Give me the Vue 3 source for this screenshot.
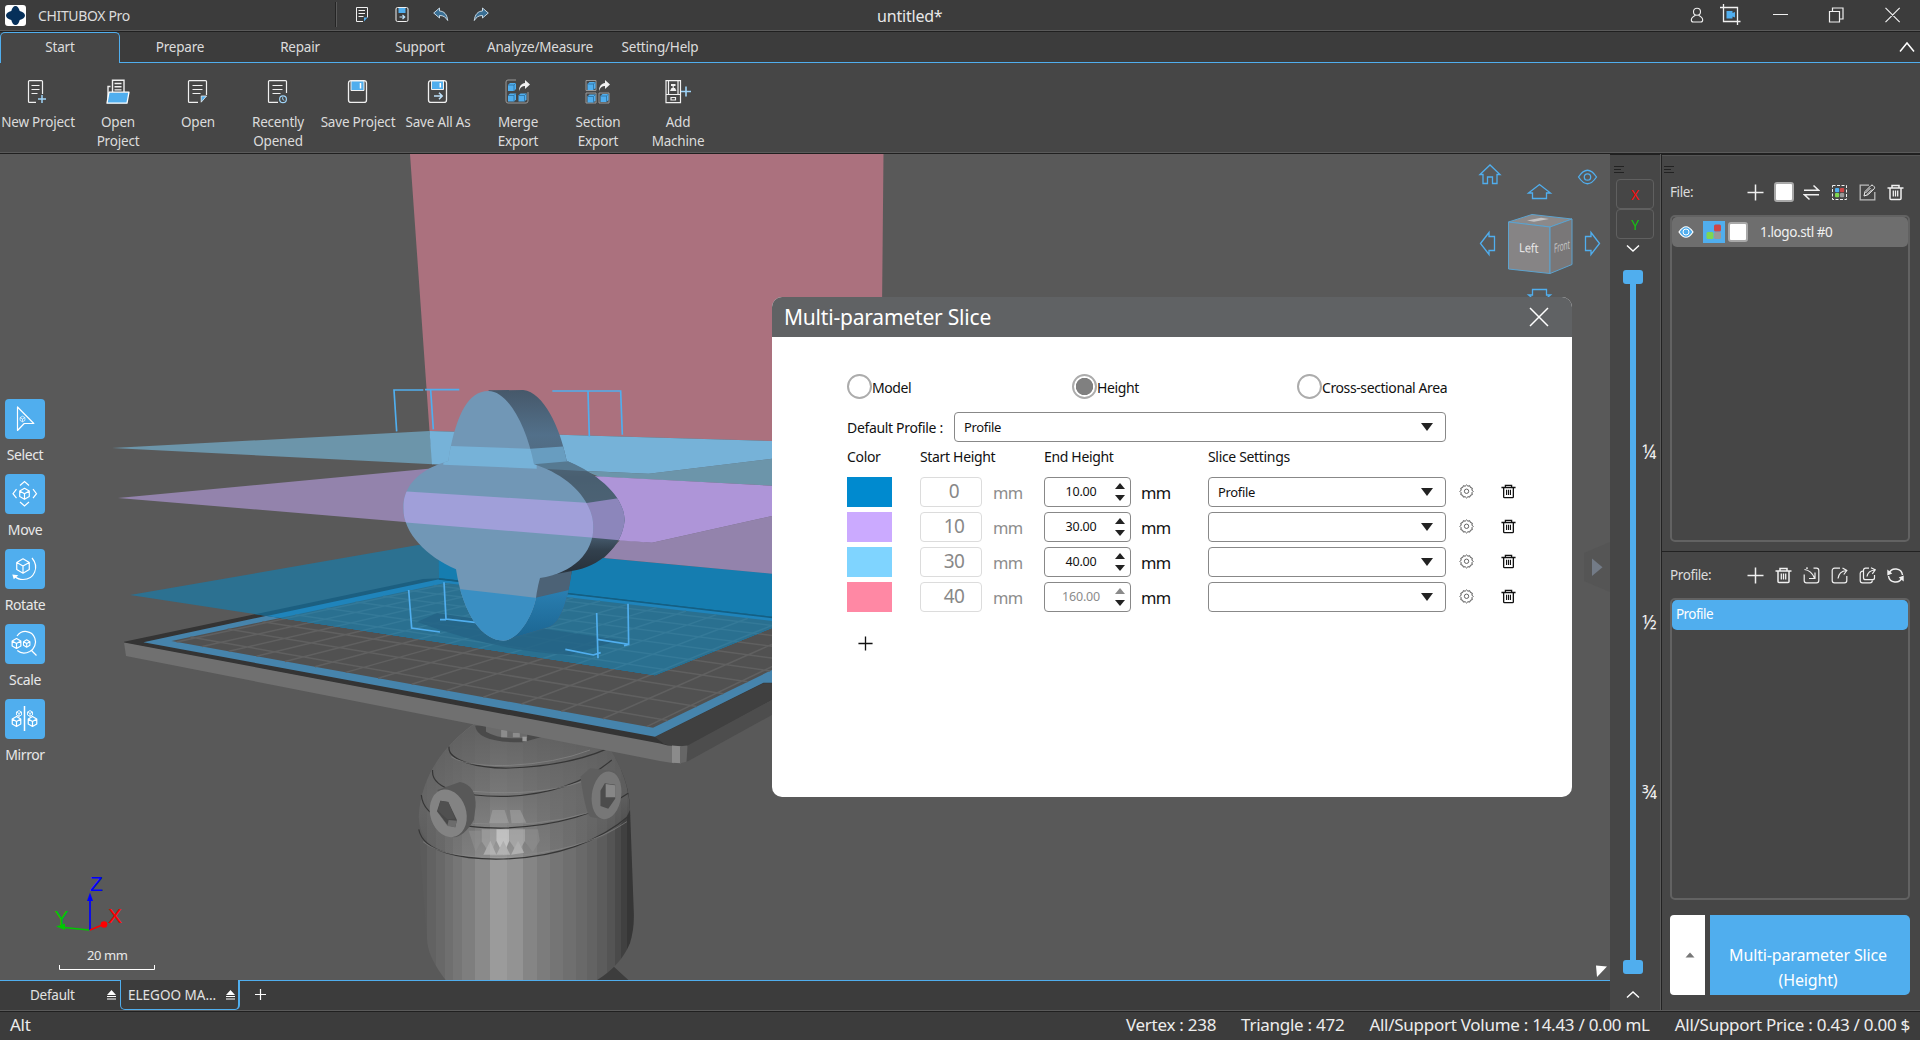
<script setup>
const tabs = ['Start', 'Prepare', 'Repair', 'Support', 'Analyze/Measure', 'Setting/Help']

const W = '#f0f0f0'
const B = '#50aeee'
const cube = (x, y, r, c, w = 1) => {
  const h = r * 0.87
  const q = r / 2
  return `<path fill="none" stroke="${c}" stroke-width="${w}" stroke-linejoin="round" d="M${x} ${y - r}l${h} ${q}v${r}l${-h} ${q}l${-h} ${-q}v${-r}zM${x - h} ${y - q}l${h} ${q}l${h} ${-q}M${x} ${y}v${r}"/>`
}
const solid = (x, y) =>
  `<path fill="${B}" d="M${x} ${y + 2}l2-2h6v6l-2 2h-6z"/><path fill="none" stroke="#2f6f9c" stroke-width=".8" d="M${x} ${y + 2}h6l2-2M${x + 6} ${y + 2}v6"/>`

const icons = {
  newProject: `<path fill="none" stroke="${W}" stroke-width="1.2" d="M12 23.4H5.5a1 1 0 0 1-1-1V2.6a1 1 0 0 1 1-1h12a1 1 0 0 1 1 1V15M7.500 6.500h8M7.500 10.500h8M7.500 14.500h6"/><path stroke="#9fd4f8" stroke-width="1.500" d="M18 16v8M14 20h8"/>`,
  openProject: `<path fill="none" stroke="${W}" stroke-width="1.400" d="M8.500 13V1.200h11.500V13M4 20V7.500h2.500M10.500 4.500h7M10.500 7.700h7M10.500 10.900h7"/><path fill="#50aeee" stroke="#fff" stroke-width="1.300" stroke-linejoin="round" d="M5 13.200h20l-2 11H3z"/>`,
  open: `<path fill="none" stroke="${W}" stroke-width="1.200" d="M14 23.400H5.500a1 1 0 0 1-1-1V2.600a1 1 0 0 1 1-1h16a1 1 0 0 1 1 1V16M8.500 6.500h10M8.500 10.500h10M8.500 14.500h8"/><path fill="${B}" stroke="${W}" stroke-width=".8" d="M22.600 17h-5.400v6.200z"/>`,
  recent: `<path fill="none" stroke="${W}" stroke-width="1.200" d="M14 23.400H5.500a1 1 0 0 1-1-1V2.600a1 1 0 0 1 1-1h16a1 1 0 0 1 1 1V14M8.500 6.500h10M8.500 10.500h10M8.500 14.500h8"/><circle cx="19" cy="20.200" r="3.400" fill="none" stroke="#9fd4f8" stroke-width="1.200"/><path fill="none" stroke="#9fd4f8" d="M18.700 18.200v2.200l1.600 1"/>`,
  save: `<rect x="4.500" y="1.600" width="18" height="21.800" rx="2.500" fill="none" stroke="${W}" stroke-width="1.300"/><path fill="${B}" stroke="${W}" d="M7 2h13v9.500H7z"/><path stroke="#fff" stroke-width="1.500" d="M16.500 4v5.500"/>`,
  saveAs: `<rect x="4.500" y="1.600" width="18" height="21.800" rx="2.500" fill="none" stroke="${W}" stroke-width="1.300"/><path fill="${B}" stroke="${W}" d="M7.500 2h12v8.500h-12z"/><path stroke="#fff" stroke-width="1.500" d="M16.300 4v4.500"/><path fill="none" stroke="#bfe2fb" stroke-width="1.500" d="M10 17h8M15 13.800l3.200 3.200-3.200 3.200"/>`,
  merge: `<path fill="none" stroke="#999" d="M12 1H4a2 2 0 0 0-2 2v19a2 2 0 0 0 2 2h18a2 2 0 0 0 2-2v-9"/>${solid(4, 4)}${solid(4, 14.5)}${solid(14.5, 14.5)}<path fill="${W}" d="M15 12c0-5 2.500-7.500 6-8V1l5 4.500-5 4.500V7c-3 .2-5 1.500-6 5z"/>`,
  section: `<path fill="none" stroke="#999" d="M2 1.500h10v10H2zM2 14h10v10H2zM15 14h10v10H15z"/>${solid(3.5, 3)}${solid(3.5, 15.5)}${solid(16.5, 15)}<path fill="${W}" d="M15 12c0-5 2.500-7.500 6-8V1l5 4.500-5 4.500V7c-3 .2-5 1.500-6 5z"/>`,
  machine: `<path fill="none" stroke="${W}" stroke-width="1.200" d="M2 1.600h14.500v22H2zM4.500 1.600V15M14 1.600V15M2 15.500h14.500M7 18.500h4.500v2.500H7zM9.200 5.500v4"/><path fill="${W}" d="M7 5h4.500v2H7zM6 12l1.500-3h3.500l1.500 3z"/><path stroke="#9fd4f8" stroke-width="1.600" d="M22 7.500v10M17 12.500h10"/>`,
  doc: `<path fill="none" stroke="${W}" stroke-width="1" d="M9 15.500H2.500V1.500h11v10M4.500 4.500h6.500M4.500 7.500h6.500M4.500 10.500h5"/><path fill="${B}" d="M13.500 11.500h-3.500v4z"/>`,
  qsave: `<rect x="2" y="1.500" width="12" height="14" rx="1.500" fill="none" stroke="${W}"/><path fill="${B}" d="M4.500 2h7v5h-7z"/><path fill="none" stroke="#bfe2fb" stroke-width="1.200" d="M5.500 11h5M8.500 9l2.200 2-2.200 2"/>`,
  undo: `<path fill="#3a6f94" stroke="#d8e6f0" stroke-width=".9" stroke-linejoin="round" d="M.7 7 6.500 2v3c4.500.2 7.500 3.200 8.200 9.500C12.500 11 10.500 9.500 6.500 9.500v2.500z"/>`,
  redo: `<path fill="#3a6f94" stroke="#d8e6f0" stroke-width=".9" stroke-linejoin="round" d="M15.300 7 9.500 2v3C5 5.200 2 8.200 1.300 14.500 3.500 11 5.500 9.500 9.500 9.500v2.500z"/>`,
  user: `<circle cx="8" cy="4.700" r="3.500" fill="none" stroke="${W}" stroke-width="1.100"/><path fill="none" stroke="${W}" stroke-width="1.100" d="M6.500 8.200C3.800 9.500 2.300 11.500 2.300 13c0 1.500.7 2 2 2h7.400c1.300 0 2-.5 2-2 0-1.500-1.500-3.500-4.200-4.800"/>`,
  record: `<path fill="none" stroke="${W}" stroke-width="1.300" d="M3.500 0v17.500H20.500M0 3.500h17.500V21"/><path fill="${B}" d="M6.500 7h6v2l2.500-1v5.500l-2.500-1v2h-6z"/>`,
  trash: `<path fill="none" stroke="currentColor" stroke-width="1.500" d="M.5 4h16M5 4V1.500h7V4M3 4v10.500a1 1 0 0 0 1 1h9a1 1 0 0 0 1-1V4"/><path stroke="currentColor" stroke-width="1.300" d="M6.300 6.500v6M8.500 6.500v6M10.700 6.500v6"/>`,
  plus: `<path stroke="currentColor" stroke-width="1.500" d="M8.500 .5v16M.5 8.500h16"/>`,
  swap: `<path fill="none" stroke="${W}" stroke-width="1.500" d="M1 6.200h14.500L10.500 1.500M16 10.800H1.500l5 4.700"/>`,
  palette: `<rect x="1.500" y="1.500" width="14" height="14" fill="none" stroke="${W}" stroke-dasharray="3 1.500"/><rect x="4" y="4" width="4.200" height="4.200" rx="1" fill="#50aeee"/><rect x="9" y="4" width="4.200" height="4.200" rx="1" fill="#cf4646"/><rect x="4" y="9" width="4.200" height="4.200" rx="1" fill="#7fd651"/><rect x="9" y="9" width="4.200" height="4.200" rx="1" fill="#999"/>`,
  edit: `<path fill="none" stroke="#bbb" stroke-width="1.300" d="M10 1.200H1.200v14.600h14.600V8"/><path fill="none" stroke="${W}" d="M5 12l1-4.500 6-6a1.500 1.500 0 0 1 2 0l1.200 1.200a1.500 1.500 0 0 1 0 2l-6 6zM6.500 9l5-5M8 10.500l5-5"/>`,
  importIn: `<path fill="none" stroke="${W}" stroke-width="1.200" d="M5 1.200H3M10.500 1.200h3a2.300 2.300 0 0 1 2.300 2.300v10a2.300 2.300 0 0 1-2.300 2.300h-10a2.300 2.300 0 0 1-2.300-2.300v-6M1.500 2.500C5 3 9 5 11.500 11M12 5.500v6H6"/>`,
  exportOut: `<path fill="none" stroke="${W}" stroke-width="1.200" d="M9 1.200H3.500a2.300 2.300 0 0 0-2.300 2.300v10a2.300 2.300 0 0 0 2.300 2.300h10a2.300 2.300 0 0 0 2.300-2.300V9M7 11.500c.5-4 3-7.500 8.500-8M11.500 1l4.300 2.500-3 4"/>`,
  exportAll: `<path fill="none" stroke="${W}" stroke-width="1.200" d="M10 1.200H6.500a2 2 0 0 0-2 2v7.500a2 2 0 0 0 2 2h7a2 2 0 0 0 2-2V8M4 4.200a2.500 2.500 0 0 0-2.800 2.300v7a2.300 2.300 0 0 0 2.300 2.300h7.500a2.300 2.300 0 0 0 2.300-2.300M8 9.500c.5-3 3-6 8-6.500M12 .8l4.300 2-3 4"/>`,
  refresh: `<path fill="none" stroke="${W}" stroke-width="1.500" d="M2 6.500a7 7 0 0 1 13.500 1.500M15 10.500A7 7 0 0 1 1.500 9"/><path fill="${W}" d="M.3 2.500v6l5-2zM16.700 14.500v-6l-5 2z"/>`,
  gear: `<path fill="none" stroke="#555" stroke-width="1.100" d="M8 1.500l1.500 1.400 2.100-.5.600 2 2.100.600-.4 2.200 1.400 1.500-1.400 1.400.4 2.200-2.100.600-.6 2-2.100-.4L8 15.900l-1.500-1.400-2.100.4-.6-2-2.100-.6.4-2.200L.7 8.700l1.400-1.500-.4-2.200 2.100-.6.600-2 2.100.5z" transform="translate(.3 -.5)"/><circle cx="8.300" cy="8" r="2.400" fill="none" stroke="#555"/>`,
  select: `<path fill="none" stroke="#fff" stroke-width="1.200" stroke-linejoin="round" d="M12.500 8v23.500l6.700-7h9.600z"/>${cube(17.5, 20, 2.8, '#fff', 0.7)}`,
  move: `<path fill="none" stroke="#fff" stroke-width="1.200" d="M15 11.500l4.500-4 4.500 4M15 28l4.500 4 4.500-4M11.500 15.200 8 19.700l3.500 4.500M28 15.200l3.500 4.500-3.500 4.500"/>${cube(19.5, 19.8, 5.5, '#fff', 1.2)}`,
  rotate: `${cube(18, 17, 7.2, '#fff', 1.2)}<path fill="none" stroke="#fff" stroke-width="1.200" d="M27 9c7.500 9 2.500 21.500-9 21.500-3.500 0-6-1-8-3"/><path fill="#fff" d="M7.300 25.500l6 .8-4.500 4z"/>`,
  scale: `${cube(11.5, 19.5, 5, '#fff', 1.2)}${cube(21.7, 19.5, 3.7, '#fff', 1.1)}<path fill="none" stroke="#fff" stroke-width="1.200" d="M12 12C17 5 27 6.500 29.800 14c2 5-.5 11-5 13.500-4 2-9 2-12.500-1M26.500 26.500l5 5"/>`,
  mirror: `<path stroke="#fff" stroke-width="1.500" d="M19.500 7v25"/>${cube(11.5, 22.5, 4.9, '#fff', 1.2)}${cube(27.5, 22.5, 4.9, '#fff', 1.2)}${cube(14, 14.5, 2.9, '#fff', 0.9)}${cube(25, 14.5, 2.9, '#fff', 0.9)}`,
}

const ribbon = [
  { icon: 'newProject', lines: ['New Project'] },
  { icon: 'openProject', lines: ['Open', 'Project'] },
  { icon: 'open', lines: ['Open'] },
  { icon: 'recent', lines: ['Recently', 'Opened'] },
  { icon: 'save', lines: ['Save Project'] },
  { icon: 'saveAs', lines: ['Save All As'] },
  { icon: 'merge', lines: ['Merge', 'Export'] },
  { icon: 'section', lines: ['Section', 'Export'] },
  { icon: 'machine', lines: ['Add', 'Machine'] },
]

const tools = [
  ['select', 'Select'],
  ['move', 'Move'],
  ['rotate', 'Rotate'],
  ['scale', 'Scale'],
  ['mirror', 'Mirror'],
]

const rows = [
  { tone: 'blue', start: '0', end: '10.00', profile: 'Profile' },
  { tone: 'violet', start: '10', end: '30.00', profile: '' },
  { tone: 'sky', start: '30', end: '40.00', profile: '' },
  { tone: 'pink', start: '40', end: '160.00', profile: '', last: true },
]

const status = ['Vertex : 238', 'Triangle : 472', 'All/Support Volume : 14.43 / 0.00 mL', 'All/Support Price : 0.43 / 0.00 $']

// Build plate grid: the plate is 143.4 x 89.6 mm, seen in perspective.
const [p0, p1, p2, p3] = [[171.5, 641], [653, 727.7], [853.5, 630.5], [445, 583]]
const dx1 = p1[0] - p2[0], dx2 = p3[0] - p2[0], dx3 = p0[0] - p1[0] + p2[0] - p3[0]
const dy1 = p1[1] - p2[1], dy2 = p3[1] - p2[1], dy3 = p0[1] - p1[1] + p2[1] - p3[1]
const det = dx1 * dy2 - dx2 * dy1
const g = (dx3 * dy2 - dx2 * dy3) / det
const h = (dx1 * dy3 - dx3 * dy1) / det
const project = (u, v) => {
  const w = g * u + h * v + 1
  const x = ((p1[0] - p0[0] + g * p1[0]) * u + (p3[0] - p0[0] + h * p3[0]) * v + p0[0]) / w
  const y = ((p1[1] - p0[1] + g * p1[1]) * u + (p3[1] - p0[1] + h * p3[1]) * v + p0[1]) / w
  return `${x.toFixed(1)} ${y.toFixed(1)}`
}
let grid = ''
for (let i = 0; i < 15; i++) {
  const u = (i + 0.2) / 14.34
  grid += `M${project(u, 0)}L${project(u, 1)}`
}
for (let i = 0; i < 9; i++) {
  const v = (i + 0.48) / 8.96
  grid += `M${project(0, v)}L${project(1, v)}`
}

// Facets of the cylinder, left to right.
const shades = ['#5b5b5b', '#626262', '#686868', '#6f6f6f', '#767676', '#7e7e7e', '#8a8a8a', '#9b9b9b', '#939393', '#858585', '#7c7c7c', '#757575', '#6f6f6f', '#696969', '#636363', '#5c5c5c', '#545454', '#4a4a4a', '#404040', '#363636']
const bounds = [0, 4, 8, 12, 16, 20, 26, 33, 41, 48.5, 55, 61, 67, 73, 78, 83, 87.5, 91, 94, 97, 100]
const facets = shades.flatMap((c, i) => [
  { at: bounds[i] + '%', c },
  { at: bounds[i + 1] + '%', c },
])
</script>

<template>
  <div class="app">
    <header class="titlebar">
      <svg class="logo" width="21" height="21" viewBox="0 0 21 21"><rect width="21" height="21" rx="3" fill="#fff" /><path fill="#06305a" d="M10.500 1c2 0 3.500 2 4.200 5 3 .8 5.300 2.500 5.300 4.500s-2.300 3.700-5.300 4.500c-.7 3-2.200 5-4.200 5s-3.500-2-4.200-5C3.300 14.200 1 12.500 1 10.500S3.300 6.800 6.300 6C7 3 8.500 1 10.500 1z" /></svg>
      <span class="appname">CHITUBOX Pro</span>
      <i class="vline"></i>
      <svg v-for="n in ['doc', 'qsave', 'undo', 'redo']" :key="n" class="quick" width="16" height="17" viewBox="0 0 16 17" v-html="icons[n]"></svg>
      <span class="doctitle">untitled*</span>
      <svg class="user" width="16" height="16" viewBox="0 0 16 16" v-html="icons.user"></svg>
      <svg class="record" width="21" height="21" viewBox="0 0 21 21" v-html="icons.record"></svg>
      <svg class="winctl" width="128" height="16" viewBox="0 0 128 16" fill="none" stroke="#f0f0f0" stroke-width="1.200"><path d="M0 7.500h15M56.500 4.500h10v10.500h-10zM59.500 4.500V1h10.500v11h-3.500M112.500 .8l14.200 14.400M126.700 .8l-14.200 14.400" /></svg>
    </header>

    <nav class="tabs">
      <span v-for="(t, i) in tabs" :key="t" class="tab" :class="{ active: i === 0 }">{{ t }}</span>
      <span class="tabrest"><svg width="16" height="12" viewBox="0 0 16 12"><path d="M1 10.500 8 2l7 8.500" fill="none" stroke="#fff" stroke-width="1.500" /></svg></span>
    </nav>

    <section class="ribbon">
      <div v-for="r in ribbon" :key="r.icon" class="rbtn">
        <svg width="27" height="26" viewBox="0 0 27 26" v-html="icons[r.icon]"></svg>
        <span v-for="l in r.lines" :key="l">{{ l }}</span>
      </div>
    </section>

    <main class="main">
      <div class="center">
        <div class="viewport">
          <svg class="scene" width="1610" height="826" viewBox="0 154 1610 826">
            <defs>
              <linearGradient id="cyl"><stop v-for="(f, i) in facets" :key="i" :offset="f.at" :stop-color="f.c" /></linearGradient>
              <linearGradient id="dome" x1="0" y1="0" x2="0" y2="1"><stop offset="0" stop-color="#5c5c5c" stop-opacity=".9" /><stop offset=".55" stop-color="#6a6a6a" stop-opacity=".7" /><stop offset="1" stop-color="#6a6a6a" stop-opacity="0" /></linearGradient>
              <linearGradient id="side" x1="0" y1="0" x2="0" y2="1"><stop offset="0" stop-color="#46586a" /><stop offset=".18" stop-color="#52708a" /><stop offset=".3" stop-color="#50687d" /><stop offset=".35" stop-color="#475d70" /><stop offset=".55" stop-color="#526c82" /><stop offset=".64" stop-color="#32404d" /><stop offset=".72" stop-color="#28323c" /><stop offset=".76" stop-color="#4a6075" /><stop offset="1" stop-color="#4a6075" /></linearGradient>
              <linearGradient id="sideBlue" x1="0" y1="0" x2="0" y2="1"><stop offset="0" stop-color="#2a7fb2" /><stop offset="1" stop-color="#1a638e" /></linearGradient>
              <path id="frontShape" d="M325 723C262 723 233 800 214 882Q208 905 205 933Q180 940 155 952C100 980 70 1020 70 1075C70 1150 140 1220 228 1258C250 1400 310 1472 370 1472C425 1468 465 1380 470 1330Q474 1305 480 1284C580 1268 640 1210 640 1130C638 1040 550 970 462 943C440 830 385 723 325 723Z" />
              <path id="sideShape" d="M325 721L430 720C490 727 540 830 560 932C640 965 733 1030 734 1112C725 1190 660 1250 575 1263C565 1340 545 1420 505 1432L370 1472L480 1284L600 1100L462 943Z" />
              <clipPath id="frontClip"><use href="#frontShape" /></clipPath>
              <clipPath id="sideClip"><use href="#sideShape" /></clipPath>
              <clipPath id="layerClip"><path d="M130 595L418 545L772 573V628L655 675.300z" /></clipPath>
              <clipPath id="sceneClip"><path d="M0 154h790V980H0z" /></clipPath>
            </defs>

            <g clip-path="url(#sceneClip)">
              <g transform="translate(100 560) scale(.43367 .33333)">
                <path fill="#3d3d3d" d="M1185 1190v30l35 42H1000z" />
                <path fill="url(#cyl)" d="M865 490C800 550 740 640 735 770L740 900L755 1150Q760 1200 800 1265H1140Q1200 1220 1222 1150Q1232 1110 1231 1060L1222 740C1220 680 1200 610 1172 560L1020 520Z" />
                <path fill="url(#dome)" d="M865 490C800 550 740 640 735 770Q738 860 810 880Q930 910 1060 880Q1200 830 1222 750C1220 680 1200 610 1172 560L1020 520Z" />
                <g opacity=".6"><path fill="#8f8f8f" d="M850 812h28v34l-12 30zM980 808h30l4 34-16 34-20-34z" /><path fill="#a8a8a8" d="M880 808h34v32l-14 44-20-40z" /><path fill="#e2e2e2" d="M914 808h30v34l-14 42-16-42z" /><path fill="#b5b5b5" d="M944 808h36v34l-16 38-20-38z" /><path fill="#c4c4c4" d="M900 842l14 42h-30zM930 842l16 42h-32zM964 842l14 36-30 6z" /><path fill="#b0b0b0" d="M905 750h28l10 40h-46zM945 750h24l14 38-34 2z" opacity=".7" /></g>
                <g fill="none" stroke="#363636" stroke-width="1.200">
                  <path vector-effect="non-scaling-stroke" d="M805 560C800 600 870 626 945 624Q1080 618 1172 565" />
                  <path vector-effect="non-scaling-stroke" d="M767 630C762 690 850 712 940 709Q1090 700 1180 600" />
                  <path vector-effect="non-scaling-stroke" d="M741 705C745 780 830 806 935 804Q1110 795 1218 700" />
                  <path vector-effect="non-scaling-stroke" d="M735 808C745 875 830 900 930 897Q1110 890 1222 765" />
                </g>
                <g fill="none" stroke="#8c8c8c" opacity=".6">
                  <path vector-effect="non-scaling-stroke" d="M810 590C840 616 900 618 945 616Q1050 610 1130 570" />
                  <path vector-effect="non-scaling-stroke" d="M860 694Q1010 710 1110 665" />
                  <path vector-effect="non-scaling-stroke" d="M860 790Q1010 805 1130 757" />
                  <path vector-effect="non-scaling-stroke" d="M745 845C790 890 860 892 930 889Q1110 878 1215 785" />
                </g>
                <path fill="#4a4a4a" d="M865 497Q870 548 975 547L1020 530L985 490z" />
                <path fill="#6a6a6a" d="M890 497h95v36q-60 8-95-18z" /><path fill="#8c8c8c" d="M925 510h14v22h-14zM952 518h16v14h-16z" /><path fill="#9a9a9a" d="M974 530h10v14h-10z" />
                <path fill="#585858" d="M778 690L830 666Q868 675 866 740L862 780Q840 830 815 832z" />
                <ellipse cx="803" cy="760" rx="42" ry="72" fill="#838383" transform="rotate(-8 803 760)" />
                <path fill="#484848" d="M785 722l18 4 20 54-4 22-18-6-24-42z" /><path fill="#6c6c6c" d="M777 752l24 44 3-16 19 2-4 20-18-4z" /><path fill="#505050" d="M785 722l18 4 16 50-18 2-22-26z" />
                <path fill="#5e5e5e" d="M1108 650L1130 625L1185 632L1200 660L1160 778L1130 770Q1118 750 1108 650z" />
                <ellipse cx="1168" cy="706" rx="34" ry="72" fill="#777" transform="rotate(5 1168 706)" />
                <path fill="#4c4c4c" d="M1164 670l24 4v42l-16 30-18-8v-46z" /><path fill="#878787" d="M1166 672l22 4v36h-22z" />
              </g>

              <path fill="#343434" d="M124 641.700L423 579L445 578L790 618V690L687.600 746H668L124 643z" />
              <path fill="#404040" d="M655 737L763.500 683.300H790V690L687.600 746Q676 748 664 744z" />
              <path fill="#707070" d="M124 642.500L660 743.500Q668 746 674 746V763.300L660 761L126 656z" />
              <path fill="#8b8b8b" d="M672 745.500l9 .8v17l-9-.5z" /><path fill="#666" d="M680 746.300l7.600-.8v16l-7.600 1.800z" />
              <path fill="#4d4d4d" d="M687.600 745.500L790 690V705L686.500 762z" />
              <path fill="#4684ac" d="M143.400 642.300L438 579L790 619V682.700H763.500L655 736.700z" />
              <path fill="#515151" d="M171.500 641L445 583L853.500 630.500L653 727.700z" />
              <path :d="grid" fill="none" stroke="#606060" stroke-width="1.500" />

              <g clip-path="url(#layerClip)">
                <path fill="#2c7191" d="M100 540h700v150H100z" />
                <path fill="#1c5f80" d="M124 641.700L423 579L445 578L790 618V690H400z" />
                <path fill="#1f84bb" d="M143.400 642.300L438 579.500L790 619V690H500z" />
                <path fill="#2a7090" d="M171.500 641L445 583L853.500 630.500L653 727.700z" />
                <path :d="grid" fill="none" stroke="#347998" stroke-width="1.500" />
                <path fill="#246384" d="M417 622L437 613L620 640L570 655Q500 652 417 622z" opacity=".8" />
              </g>
              <path fill="#157db0" d="M438.700 558L604 558L772 573.700V616.700L567 593L439 578z" />
              <path fill="none" stroke="#145f83" stroke-width="1.500" d="M439 579L567 593.500L772 617.500" />
            </g>

            <path fill="#ab717e" d="M410 154H883.500L882 310L772 460V441L429.500 431z" />

            <g clip-path="url(#sceneClip)">
              <path fill="#6c95aa" d="M112 448L429.500 431L433 464.300zM585 471L648.700 473.700L772 458.700V485.700L599 476.700z" />
              <path fill="#76b2d8" d="M429.500 431L772 441V458.700L648.700 473.700L432 464.300z" />
              <path fill="#9383ac" d="M118 498L431 468.500L470 470V525L405 522zM604 558L620 540L652 542.700L772 516V573.700z" />
              <path fill="#ae95d8" d="M590 476L772 485.700V516L652 542.700L600 539z" />

              <g transform="translate(380 150) scale(.33333)">
                <path fill="none" stroke="#50aeee" stroke-width="5" d="M50 844L42 720H130M160 838L152 720M135 719H238M517 723H722L727 854M624 723L628 860M86 1320L95 1434L180 1446M192 1297L198 1407L285 1417M180 1409H198M744 1361L746 1483L652 1468M732 1487L746 1483" />
                <path fill="none" stroke="#50aeee" stroke-width="5" d="M650 1389L654 1525M556 1498L640 1515L662 1508" />
                <use href="#sideShape" fill="url(#side)" />
                <g clip-path="url(#sideClip)">
                  <path fill="#689dc0" d="M440 897L560 889V932L700 968L462 955z" />
                  <path fill="#4b6072" d="M462 943L566 934Q650 970 712 1045L620 1058Z" opacity=".6" />
                  <path fill="#8c86bb" d="M600 1062L740 1041V1173L620 1162z" />
                  <path fill="#4c6276" d="M470 1284L580 1262V1317L460 1344z" />
                  <path fill="url(#sideBlue)" d="M460 1345L580 1317V1480H360z" />
                </g>
                <use href="#frontShape" fill="#7197b6" />
                <g clip-path="url(#frontClip)">
                  <path fill="#76b2d8" d="M190 887L470 897V956L190 944z" />
                  <path fill="#a09fd9" d="M60 1023L650 1060V1164L60 1116z" />
                  <path fill="#3a8fc3" d="M230 1316L490 1346V1480H230z" />
                </g>
              </g>
            </g>

            <g fill="none" stroke="#50aeee" stroke-width="1.300">
              <path d="M1480 174.500L1490 165L1500 174.500H1497V183.500H1492.500V177H1487.500V183.500H1483V174.500z" />
              <path d="M1578.500 177Q1587.500 163.500 1596.500 177Q1587.500 190.500 1578.500 177z" /><circle cx="1587.500" cy="177" r="3.200" />
              <path d="M1528.500 193L1539.500 184.500L1550.500 193H1546.500V198.500H1532.500V193z" />
              <path d="M1528.500 295H1532.500V289.500H1546.500V295H1550.500L1539.500 304z" />
              <path d="M1480.500 243.500L1489 232.500V236.500H1494.500V250.500H1489V254.500z" />
              <path d="M1599.500 243.500L1591 232.500V236.500H1585.500V250.500H1591V254.500z" />
            </g>
            <g stroke="#5ca3cf" stroke-width="1">
              <path fill="#8b898a" d="M1508.500 222L1532 214.500L1572 219L1550 227z" />
              <path fill="#868485" d="M1508.500 222L1550 227V273.500L1508.500 269z" />
              <path fill="#797778" d="M1550 227L1572 219V264.500L1550 273.500z" />
            </g>
            <path fill="#d5d5d5" opacity=".75" d="M1527 220.500l14-2.800 8 1.200-15 2.800z" />
            <text class="cubeText" font-size="12.500" transform="translate(1519 252) skewY(3) scale(.9 1)">Left</text>
            <text class="cubeText dim" font-size="12" transform="translate(1554 253) skewY(-16) scale(.54 1.050)">Front</text>

            <path fill="#555" d="M1610 542L1584 553V581L1610 592z" /><path fill="#737b87" d="M1592 558.500l10.500 8.800-10.500 8.800z" />
            <path fill="#fff" d="M1596 965.500L1607 966.500L1597 977z" />

            <g stroke-width="1.700" fill="none"><path stroke="#0000ff" d="M90 930V900" /><path stroke="#ff0000" d="M90 930L101 925.500" /><path stroke="#00c800" d="M89 930L64 927.500" /></g>
            <path fill="#0000ff" d="M87 901L90 892.500L93 901z" /><circle cx="104" cy="924.500" r="3.300" fill="#f00" /><path fill="#00c800" d="M56 926.500l9-3v6.500z" />
            <g class="axis"><text x="90" y="890.500" fill="#0000ff">Z</text><text x="108" y="922.500" fill="#f00">X</text><text x="54.500" y="924.500" fill="#00c800">Y</text></g>
            <text class="scaleText" x="87" y="960">20 mm</text>
            <path fill="none" stroke="#fff" d="M59.500 965V969.500H154.500V965" />
          </svg>

          <div class="tools">
            <div v-for="[icon, label] in tools" :key="icon" class="tool">
              <svg width="40" height="40" viewBox="0 0 40 40" v-html="icons[icon]"></svg>
              <span>{{ label }}</span>
            </div>
          </div>
        </div>

        <div class="machines">
          <div class="machine first"><span>Default</span><svg width="9" height="10" viewBox="0 0 9 10"><path fill="#fff" d="M4.500 0 9 5H0zM0 6h9v1H0zM0 8.500h9v1H0z" /></svg></div>
          <div class="machine current"><span>ELEGOO MA...</span><svg width="9" height="10" viewBox="0 0 9 10"><path fill="#fff" d="M4.500 0 9 5H0zM0 6h9v1H0zM0 8.500h9v1H0z" /></svg></div>
          <div class="machinerest"><svg width="11" height="11" viewBox="0 0 11 11"><path stroke="#fff" stroke-width="1.200" d="M5.500 0v11M0 5.500h11" /></svg></div>
        </div>
      </div>

      <aside class="slicer">
        <svg class="grip" width="10" height="9" viewBox="0 0 10 9"><path stroke="#222" d="M0 1.500h10M0 4.500h7M0 7.500h10" /></svg>
        <div class="axisbtn x">X</div>
        <div class="axisbtn y">Y</div>
        <svg class="chev" width="14" height="9" viewBox="0 0 14 9"><path d="M1 1.500 7 7l6-5.500" fill="none" stroke="#fff" stroke-width="1.400" /></svg>
        <div class="slide">
          <i class="thumb"></i><i class="track"></i><i class="thumb"></i>
          <span class="frac q1">¼</span><span class="frac q2">½</span><span class="frac q3">¾</span>
        </div>
        <svg class="chev up" width="14" height="9" viewBox="0 0 14 9"><path d="M1 7.500 7 2l6 5.500" fill="none" stroke="#fff" stroke-width="1.400" /></svg>
      </aside>

      <aside class="side">
        <svg class="grip" width="10" height="9" viewBox="0 0 10 9"><path stroke="#222" d="M0 1.500h10M0 4.500h7M0 7.500h10" /></svg>
        <div class="bar">
          <span class="barlabel">File:</span>
          <svg width="17" height="17" viewBox="0 0 17 17" v-html="icons.plus"></svg>
          <i class="white"></i>
          <svg v-for="n in ['swap', 'palette', 'edit', 'trash']" :key="n" width="17" height="17" viewBox="0 0 17 17" v-html="icons[n]"></svg>
        </div>
        <div class="list files">
          <div class="file">
            <svg width="16" height="12" viewBox="0 0 16 12"><path fill="#50aeee" stroke="#fff" stroke-width="1.200" d="M1 6Q8-4.500 15 6 8 16.500 1 6z" /><circle cx="8" cy="6" r="3" fill="#50aeee" stroke="#fff" /></svg>
            <svg class="tile" width="22" height="22" viewBox="0 0 22 22"><rect width="22" height="22" fill="#50aeee" /><rect x="11" y="3.500" width="7" height="7" rx="1.500" fill="#cf4646" /><rect x="3.500" y="11" width="7" height="7" rx="1.500" fill="#7fd651" /><rect x="11" y="11" width="7" height="7" rx="1.500" fill="#999" /></svg>
            <i class="white"></i>
            <span>1.logo.stl #0</span>
          </div>
        </div>
        <i class="hline"></i>
        <div class="bar second">
          <span class="barlabel">Profile:</span>
          <svg v-for="n in ['plus', 'trash', 'importIn', 'exportOut', 'exportAll', 'refresh']" :key="n" width="17" height="17" viewBox="0 0 17 17" v-html="icons[n]"></svg>
        </div>
        <div class="list profiles"><div class="prof">Profile</div></div>
        <div class="go">
          <div class="drop"><svg width="10" height="6" viewBox="0 0 10 6"><path fill="#777" d="M5 .5 9.500 5.500H.5z" /></svg></div>
          <div class="slice"><span>Multi-parameter Slice</span><span>(Height)</span></div>
        </div>
      </aside>
    </main>

    <footer class="status">
      <span class="alt">Alt</span>
      <span v-for="s in status" :key="s">{{ s }}</span>
    </footer>

    <div class="dialog">
      <div class="dhead"><span>Multi-parameter Slice</span><svg width="20" height="20" viewBox="0 0 20 20"><path stroke="#fff" stroke-width="1.500" d="M1 1l18 18M19 1 1 19" /></svg></div>
      <div class="dbody">
        <div class="radios">
          <label><i class="radio"></i>Model</label>
          <label><i class="radio on"></i>Height</label>
          <label><i class="radio"></i>Cross-sectional Area</label>
        </div>
        <div class="default"><span>Default Profile :</span><div class="combo">Profile<i class="tri"></i></div></div>
        <div class="grid heads"><span>Color</span><span>Start Height</span><span>End Height</span><span>Slice Settings</span></div>
        <div v-for="r in rows" :key="r.start" class="grid row">
          <i class="swatch" :class="r.tone"></i>
          <div class="pair"><b class="start">{{ r.start }}</b><span class="mm off">mm</span></div>
          <div class="pair">
            <div class="spin" :class="{ off: r.last }">
              <span>{{ r.end }}</span>
              <svg width="10" height="18" viewBox="0 0 10 18"><path :fill="r.last ? '#8a8a8a' : '#222'" d="M5 0l5 6H0z" /><path fill="#222" d="M5 18l5-6H0z" /></svg>
            </div>
            <span class="mm">mm</span>
          </div>
          <div class="combo">{{ r.profile }}<i class="tri"></i></div>
          <svg class="gear" width="15" height="15" viewBox="0 0 16.500 16.500" v-html="icons.gear"></svg>
          <svg class="bin" width="15" height="15" viewBox="0 0 17 17" v-html="icons.trash"></svg>
        </div>
        <svg class="addrow" width="15" height="15" viewBox="0 0 17 17" v-html="icons.plus"></svg>
      </div>
    </div>
  </div>
</template>

<style>
body { background: #3c3c3c; overflow: hidden; }
</style>

<style scoped>
* { box-sizing: border-box; }
svg { display: block; flex: none; }
i { display: block; flex: none; font-style: normal; }
.app { position: relative; width: 1920px; height: 1040px; display: flex; flex-direction: column; overflow: hidden; font-family: "Noto Sans", "Open Sans", sans-serif; font-size: 13.5px; letter-spacing: -0.2px; color: #dcdcdc; background: #3c3c3c; white-space: nowrap; }

.titlebar { height: 32px; flex: none; display: flex; align-items: center; border-bottom: 1px solid #202020; box-shadow: inset 0 -1px #5a5a5a; padding-left: 5px; }
.appname { margin-left: 12px; width: 297px; font-size: 14px; letter-spacing: -0.35px; }
.vline { width: 2px; height: 25px; background: #252525; border-right: 1px solid #5a5a5a; margin-right: 17px; margin-bottom: 2px; }
.quick { margin-right: 23.5px; margin-bottom: 2px; }
.doctitle { margin-left: 365px; width: 812px; font-size: 16px; letter-spacing: -0.2px; color: #e8e8e8; }
.user { margin-bottom: 2px; }
.record { margin-left: 15px; margin-bottom: 2px; }
.winctl { margin-left: 32px; margin-bottom: 2px; }

.tabs { height: 31px; flex: none; display: flex; }
.tab { width: 120px; border-bottom: 1px solid #50aeee; text-align: center; line-height: 30px; }
.tab.active { border: 1px solid #50aeee; border-bottom: 0; border-radius: 5px 5px 0 0; background: #464646; line-height: 29px; }
.tabrest { flex: 1; border-bottom: 1px solid #50aeee; display: flex; justify-content: flex-end; padding: 9px 5px 0 0; }

.ribbon { height: 91px; flex: none; display: flex; background: #464646; border-bottom: 1px solid #202020; box-shadow: inset 0 -1px #5a5a5a; padding-top: 16px; }
.rbtn { width: 80px; display: flex; flex-direction: column; align-items: center; line-height: 19px; }
.rbtn:first-child { margin-left: -2px; }
.rbtn svg { margin: 0 2px 8px 0; }

.main { height: 856px; flex: none; display: flex; }
.center { width: 1610px; flex: none; }
.viewport { height: 826px; position: relative; background: #595959; overflow: hidden; }
.cubeText { fill: #e6e6e6; letter-spacing: -0.2px; }
.dim { fill: #c4c4c4; }
.axis { font-size: 21px; font-family: "Liberation Sans", Arial, sans-serif; letter-spacing: 0; }
.scaleText { fill: #e8e8e8; font-size: 13px; letter-spacing: -0.4px; }
.tools { position: absolute; left: 5px; top: 245px; display: flex; flex-direction: column; gap: 5px; }
.tool { width: 40px; height: 70px; display: flex; flex-direction: column; align-items: center; color: #e8e8e8; font-size: 14px; letter-spacing: -0.4px; line-height: 31px; }
.tool svg { background: #50aeee; border-radius: 4px; }

.machines { height: 30px; display: flex; color: #e2e2e2; }
.machine { width: 120px; display: flex; justify-content: space-between; line-height: 28px; }
.machine svg { margin-top: 9px; }
.first { border-top: 1px solid #50aeee; padding: 0 4px 0 30px; letter-spacing: -0.25px; }
.current { border: 1px solid #50aeee; border-right-width: 2px; border-top: 0; border-radius: 0 0 5px 5px; padding: 1px 3px 0 7px; letter-spacing: 0; }
.machinerest { flex: 1; border-top: 1px solid #50aeee; padding: 8px 0 0 15px; }

.slicer { width: 50px; flex: none; background: #464646; border-top: 1px solid #202020; padding: 10px 6px 0; display: flex; flex-direction: column; }
.slicer .grip { margin: 0 0 5px -2px; }
.axisbtn { width: 38px; height: 30px; border: 1px solid #606060; border-radius: 4px; text-align: center; font-size: 14px; line-height: 29px; }
.x { color: #f80f0f; }
.y { color: #10c010; }
.chev { margin: 5px 0 0 10px; }
.chev.up { margin-top: 16px; }
.slide { position: relative; width: 20px; height: 704px; margin: 17px 0 0 7px; display: flex; flex-direction: column; align-items: center; }
.thumb { width: 20px; height: 14px; border-radius: 3px; background: #50aeee; }
.track { width: 6px; flex: 1; background: #50aeee; }
.frac { position: absolute; left: 19px; width: 18px; font-size: 19px; line-height: 24px; letter-spacing: 0; color: #f0f0f0; }
.q1 { top: 170px; }
.q2 { top: 340px; }
.q3 { top: 510px; }

.side { flex: 1; background: #464646; border-top: 1px solid #202020; border-left: 1px solid #222; box-shadow: inset 0 1px #555, -1px 0 #5a5a5a; margin-left: 1px; padding: 10px 0 0 9px; display: flex; flex-direction: column; }
.side .grip { margin: 0 0 7px -7px; }
.bar { display: flex; align-items: center; width: 234px; height: 22px; color: #f0f0f0; gap: 11px; margin-left: -1px; }
.barlabel { width: 66px; color: #dcdcdc; letter-spacing: -0.4px; }
.white { width: 20px; height: 20px; background: #fff; border: 2px solid #a8a8a8; border-radius: 3px; }
.bar .white { margin: 0 -2px 0 -1px; }
.list { width: 240px; border: 2px solid #626262; border-radius: 5px; margin-left: -1px; }
.files { height: 327px; margin-top: 12px; }
.file { height: 30px; background: #6e6e6e; border-radius: 5px; display: flex; align-items: center; padding-left: 6px; color: #f0f0f0; letter-spacing: -0.42px; }
.tile { margin: 0 3px 0 9px; }
.file span { margin-left: 12px; }
.hline { height: 1px; background: #222; margin: 9px 0 0 -9px; }
.second { margin-top: 12px; }
.profiles { height: 302px; margin-top: 12px; }
.prof { height: 30px; border-radius: 5px; background: #50aeee; color: #fff; padding-left: 4px; line-height: 29px; letter-spacing: -0.55px; }
.go { display: flex; gap: 5px; margin: 15px 0 0 -1px; height: 80px; width: 240px; }
.drop { width: 35px; background: #fff; border-radius: 4px 0 0 4px; display: flex; align-items: center; justify-content: center; padding-left: 4px; }
.slice { width: 200px; background: #50aeee; border-radius: 0 5px 5px 0; display: flex; flex-direction: column; align-items: center; padding: 28px 4px 0 0; line-height: 25px; font-size: 16px; letter-spacing: -0.15px; color: #fff; }

.status { height: 30px; flex: none; display: flex; gap: 25px; padding: 0 10px; border-top: 1px solid #5a5a5a; box-shadow: inset 0 1px #202020; font-size: 17px; letter-spacing: -0.27px; line-height: 27px; color: #ededed; }
.alt { flex: 1; }

.dialog { position: absolute; left: 772px; top: 297px; width: 800px; height: 500px; border-radius: 10px; background: #fff; overflow: hidden; color: #111; font-size: 14px; letter-spacing: -0.4px; }
.dhead { height: 40px; background: #606264; color: #fff; font-size: 21px; letter-spacing: -0.2px; line-height: 38px; display: flex; justify-content: space-between; align-items: center; padding: 0 23px 1px 12px; }
.dbody { padding: 37px 0 0 75px; }
.radios { display: flex; height: 25px; }
.radios label { width: 225px; display: flex; line-height: 27px; }
.radio { width: 25px; height: 25px; border: 2px solid #acacac; border-radius: 50%; }
.radio.on { background: radial-gradient(circle, #808080 8.3px, #fff 9px); }
.default { display: flex; align-items: center; margin-top: 13px; height: 30px; }
.default span { width: 107px; letter-spacing: -0.33px; }
.default .combo { width: 492px; }
.combo { height: 30px; border: 1px solid #888; border-radius: 4px; display: flex; align-items: center; justify-content: space-between; padding: 0 12px 1px 9px; font-size: 13px; letter-spacing: -0.35px; }
.tri { border: 6.5px solid transparent; border-top: 8px solid #222; border-bottom: 0; margin-left: auto; }
.grid { display: grid; grid-template-columns: 73px 124px 164px 238px 27px 15px; }
.grid.heads { height: 35px; line-height: 30px; letter-spacing: -0.33px; }
.row { height: 30px; margin-bottom: 5px; align-items: center; }
.grid .gear { margin: 0 0 2px 13px; }
.grid .bin { margin: 0 0 1px 28px; color: #111; }
.swatch { width: 45px; height: 30px; }
.blue { background: #008acf; }
.violet { background: #cbaaff; }
.sky { background: #7fd4ff; }
.pink { background: #ff88a4; }
.pair { display: flex; align-items: center; }
.start { width: 62px; height: 30px; border: 1px solid #dcdcdc; border-radius: 4px; font-weight: 400; font-size: 19px; line-height: 27px; letter-spacing: -0.5px; text-align: center; color: #888; padding-left: 6px; }
.mm { font-size: 16.5px; letter-spacing: -0.6px; margin-left: 10px; }
.mm.off { margin-left: 11px; }
.off { color: #8c8c8c; }
.spin { width: 87px; height: 30px; border: 1px solid #888; border-radius: 4px; display: flex; align-items: center; padding: 0 0 1px 15px; font-size: 12.5px; letter-spacing: -0.2px; }
.spin span { width: 42px; text-align: center; }
.spin svg { margin-left: 13px; }
.spin + .mm { color: #111; }
.addrow { margin: 24px 0 0 11px; }
</style>
